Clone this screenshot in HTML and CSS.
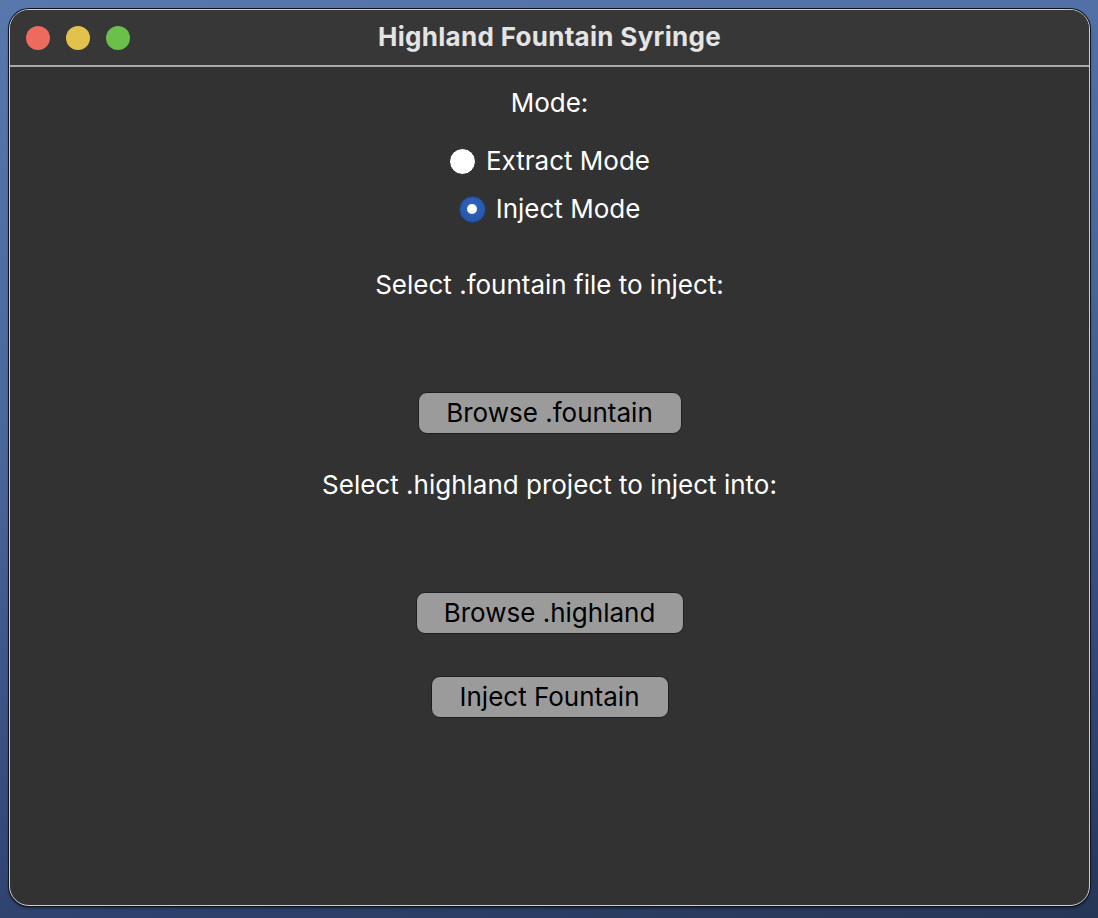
FILE: index.html
```html
<!DOCTYPE html>
<html>
<head>
<meta charset="utf-8">
<link rel="stylesheet" href="styles.css">
</head>
<body>
<div class="window">
  <div class="titlebar">
    <div class="lights">
      <span class="light red"></span>
      <span class="light yellow"></span>
      <span class="light green"></span>
    </div>
    <div class="title">Highland Fountain Syringe</div>
  </div>
  <div class="content">
    <div class="label mode-label">Mode:</div>
    <label class="radio extract"><span class="dot off"></span><span>Extract Mode</span></label>
    <label class="radio inject"><span class="dot on"></span><span>Inject Mode</span></label>
    <div class="label sel1">Select .fountain file to inject:</div>
    <button class="btn btn1">Browse .fountain</button>
    <div class="label sel2">Select .highland project to inject into:</div>
    <button class="btn btn2">Browse .highland</button>
    <button class="btn btn3">Inject Fountain</button>
  </div>
</div>
</body>
</html>
```

FILE: styles.css
```css
* { box-sizing: border-box; }
html, body { height: 100%; }
body {
  margin: 0;
  padding: 9px 8px 12px 9px;
  background: linear-gradient(170deg, #5877ad 0%, #4a679c 40%, #34497a 75%, #263656 100%);
  font-family: "Inter", "Liberation Sans", sans-serif;
}
.window {
  height: 897px;
  width: 1081px;
  background: #323232;
  border: 1px solid #cfcfcf;
  border-radius: 20px;
  box-shadow: 0 0 0 1px #0e1420, 0 2px 3px rgba(0,0,0,0.5);
  display: flex;
  flex-direction: column;
  overflow: hidden;
}
.titlebar {
  height: 57px;
  flex: none;
  background: #373737;
  border-bottom: 2px solid #a9a9a9;
  display: flex;
  align-items: center;
  position: relative;
}
.lights {
  display: flex;
  gap: 16px;
  padding-left: 16px;
}
.light {
  width: 24px;
  height: 24px;
  border-radius: 50%;
  display: block;
}
.red { background: #ed6a5e; }
.yellow { background: #e2c24c; }
.green { background: #6ac04a; }
.title {
  position: absolute;
  left: 0; right: 0;
  top: 0; bottom: 0;
  display: flex;
  align-items: center;
  justify-content: center;
  padding-bottom: 2px;
  color: #e4e4e4;
  font-weight: 700;
  font-size: 26px;
  letter-spacing: 0.3px;
}
.content {
  flex: 1;
  display: flex;
  flex-direction: column;
  align-items: center;
  color: #ffffff;
  font-size: 26px;
  padding-top: 20px;
}
.label {
  line-height: 32px;
  height: 32px;
}
.radio {
  display: flex;
  align-items: center;
  gap: 10px;
  line-height: 32px;
  height: 32px;
}
.extract { margin-top: 26px; }
.inject { margin-top: 16px; }
.dot {
  width: 27px;
  height: 27px;
  border-radius: 50%;
  display: block;
  position: relative;
}
.dot.off {
  background: #ffffff;
  border: 1.5px solid #1a1a1a;
}
.dot.on {
  background: radial-gradient(circle at 50% 40%, #2f66c4 0%, #2757a8 70%, #1f4a92 100%);
  border: 1px solid #1d3f7a;
}
.dot.on::after {
  content: "";
  position: absolute;
  width: 10px;
  height: 10px;
  border-radius: 50%;
  background: #ffffff;
  left: 50%;
  top: 50%;
  transform: translate(-50%, -50%);
}
.sel1 { margin-top: 44px; }
.sel2 { margin-top: 35px; }
.btn {
  font-family: inherit;
  font-size: 26px;
  color: #000;
  background: #9b9b9b;
  border: 1.5px solid #1e1e1e;
  border-radius: 9px;
  height: 42px;
  padding: 0;
  line-height: 38px;
  flex: none;
}
.btn1 { margin-top: 91px; width: 264px; }
.btn2 { margin-top: 91px; width: 268px; }
.btn3 { margin-top: 42px; width: 238px; }
```
